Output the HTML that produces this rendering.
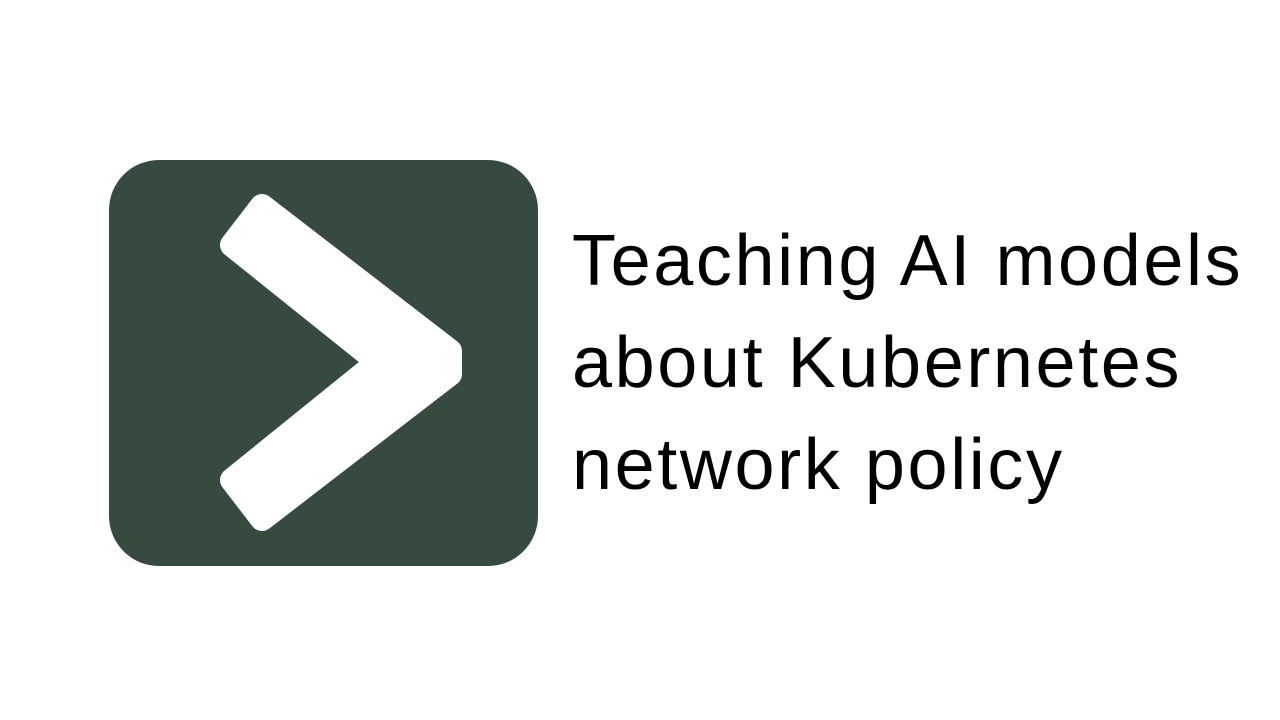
<!DOCTYPE html>
<html><head><style>
html,body{margin:0;padding:0;background:#fff;width:1280px;height:720px;overflow:hidden}
svg{position:absolute;left:0;top:0}
.t{position:absolute;left:572px;top:210px;font-family:"Liberation Sans",sans-serif;font-size:72px;line-height:102px;letter-spacing:2.6px;color:#000;white-space:nowrap}
</style></head><body>
<svg width="1280" height="720">
<rect x="109" y="160" width="429" height="406" rx="50" fill="#374a40"/>
<path d="M262 206 L450 351 L450 374 L262 519 L232 480 L378 362 L232 245 Z" fill="#fff" stroke="#fff" stroke-width="24" stroke-linejoin="round"/>
</svg>
<div class="t">Teaching AI models<br>about Kubernetes<br>network policy</div>
</body></html>
